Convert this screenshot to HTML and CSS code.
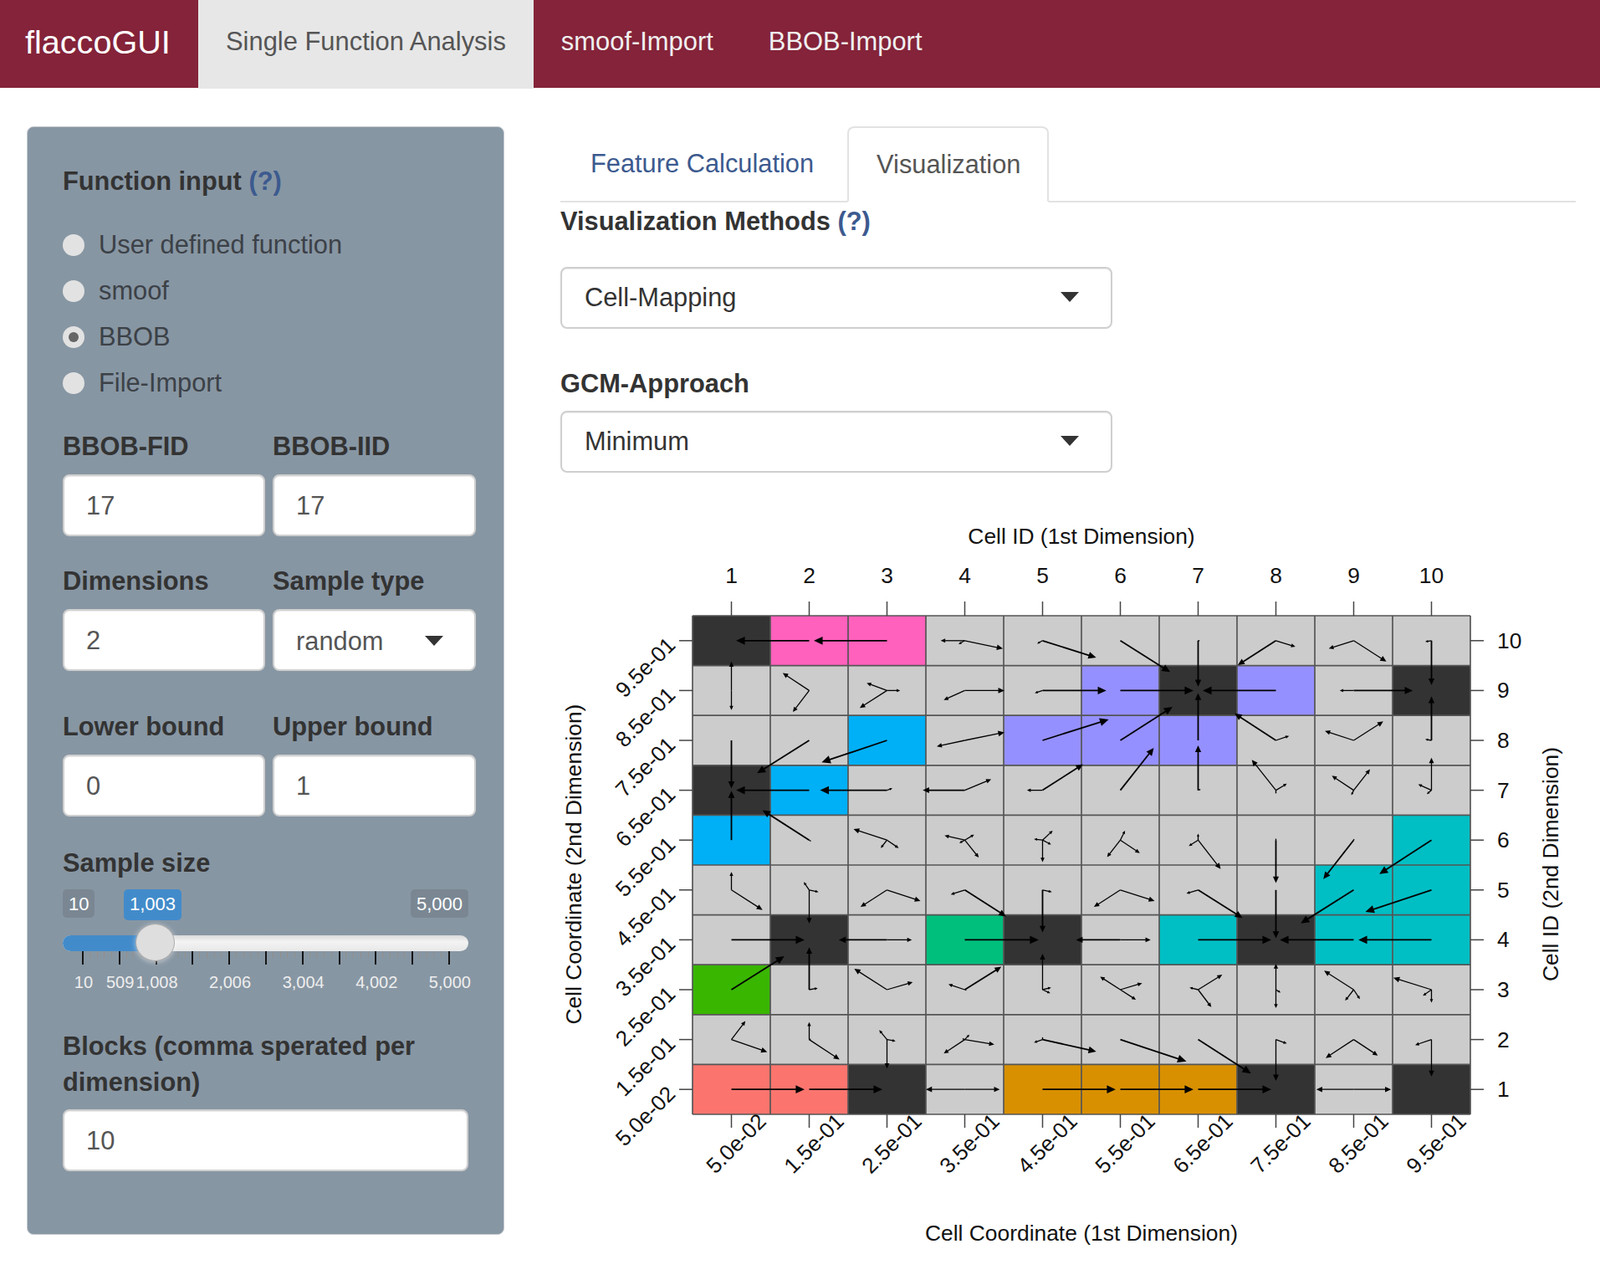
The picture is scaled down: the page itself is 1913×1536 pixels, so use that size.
FILE: index.html
```html
<!DOCTYPE html>
<html lang="en">
<head>
    <meta charset="UTF-8">
    <title>flaccoGUI</title>
    <link rel="stylesheet" href="styles.css">
</head>
<body>

<nav class="topbar">
    <a class="brand">flaccoGUI</a>
    <a class="topbar-item active">Single Function Analysis</a>
    <a class="topbar-item">smoof-Import</a>
    <a class="topbar-item">BBOB-Import</a>
</nav>

<div class="page">
    <aside class="sidebar">
        <div class="label first-label">Function input <span class="help">(?)</span></div>
        <div class="radios">
            <div class="radio"><span class="dot"></span>User defined function</div>
            <div class="radio"><span class="dot"></span>smoof</div>
            <div class="radio"><span class="dot checked"></span>BBOB</div>
            <div class="radio"><span class="dot"></span>File-Import</div>
        </div>

        <div class="two-cols">
            <div>
                <div class="label">BBOB-FID</div>
                <input class="field" type="text" value="17">
            </div>
            <div>
                <div class="label">BBOB-IID</div>
                <input class="field" type="text" value="17">
            </div>
        </div>

        <div class="two-cols">
            <div>
                <div class="label">Dimensions</div>
                <input class="field" type="text" value="2">
            </div>
            <div>
                <div class="label">Sample type</div>
                <div class="field select side-select">random<span class="caret"></span></div>
            </div>
        </div>

        <div class="two-cols bounds">
            <div>
                <div class="label">Lower bound</div>
                <input class="field" type="text" value="0">
            </div>
            <div>
                <div class="label">Upper bound</div>
                <input class="field" type="text" value="1">
            </div>
        </div>

        <div class="label sample-label">Sample size</div>
        <div class="slider">
            <div class="slider-ends">
                <span class="badge">10</span>
                <span class="badge">5,000</span>
            </div>
            <span class="badge current">1,003</span>
            <div class="slider-bar"><div class="slider-fill"></div></div>
            <span class="slider-handle"></span>
            <div class="slider-ticks"></div>
            <div class="slider-labels">
                <span>10</span><span>509</span><span>1,008</span><span></span><span>2,006</span><span></span><span>3,004</span><span></span><span>4,002</span><span></span><span>5,000</span>
            </div>
        </div>

        <div class="label blocks-label">Blocks (comma sperated per dimension)</div>
        <input class="field" type="text" value="10">
    </aside>

    <main class="content">
        <div class="tabs">
            <a class="tab">Feature Calculation</a>
            <a class="tab active">Visualization</a>
        </div>

        <div class="label methods-label">Visualization Methods <span class="help">(?)</span></div>
        <div class="field select wide-select methods"><span class="select-text">Cell-Mapping</span><span class="caret"></span></div>

        <div class="label gcm-label">GCM-Approach</div>
        <div class="field select wide-select"><span class="select-text">Minimum</span><span class="caret"></span></div>

        <svg id="plot" class="plot" viewBox="670 610 1230 900" width="1230" height="900"></svg>
    </main>
</div>

<script src="plot.js"></script>
</body>
</html>
```
FILE: styles.css
```css
body {
    margin: 0;
    font-family: "Liberation Sans", Arial, sans-serif;
    font-size: 30.8px;
    line-height: 43px;
    color: #333;
    background: white;
}

.topbar {
    display: flex;
    height: 105px;
    background-color: #842339;
    color: #f0f0f0;
}

.brand {
    padding: 29px 34px 0 30px;
    width: 173px;
    font-size: 39.6px;
    color: white;
}

.topbar-item {
    padding: 28px 33px 0;
    font-size: 30.9px;
}

.topbar-item.active {
    height: 78px;
    background-color: #e7e7e7;
    color: #555;
}

.page {
    display: flex;
    align-items: flex-start;
    padding: 46px 29px 0 32px;
}

.sidebar {
    box-sizing: border-box;
    width: 571px;
    height: 1325px;
    margin-right: 67px;
    padding: 43px 42px 0;
    flex-shrink: 0;
    background-color: #8796a3;
    border: 1px solid #c4c9ce;
    border-radius: 8px;
}

.label {
    font-weight: bold;
}

.help {
    color: #3c5a8f;
}

.first-label {
    margin-bottom: 33px;
}

.radios {
    margin-bottom: 33px;
}

.radio {
    display: flex;
    align-items: center;
    margin-bottom: 12px;
    color: #3c4147;
}

.radio:last-child {
    margin-bottom: 0;
}

.dot {
    position: relative;
    box-sizing: border-box;
    width: 26px;
    height: 26px;
    margin-right: 17px;
    background: #e2e2e2;
    border-radius: 50%;
}

.dot.checked::after {
    content: "";
    position: absolute;
    top: 7px;
    left: 7px;
    width: 12px;
    height: 12px;
    background: #666;
    border-radius: 50%;
}

.two-cols {
    display: grid;
    grid-template-columns: 242px 243px;
    gap: 9px;
    margin-bottom: 32px;
}

.two-cols .label {
    margin-bottom: 12px;
}

.two-cols + .bounds {
    margin-top: 45px;
    margin-bottom: 34px;
}

.field {
    box-sizing: border-box;
    display: block;
    width: 100%;
    height: 74px;
    padding: 2px 26px 0;
    background: white;
    border: 2px solid #cfcfcf;
    border-radius: 8px;
    box-shadow: inset 0 1px 1px rgba(0, 0, 0, 0.08);
    font-family: inherit;
    font-size: 30.8px;
    color: #555;
}

.select {
    display: flex;
    align-items: center;
    justify-content: space-between;
    color: #333;
}

.side-select {
    color: #555;
    padding-right: 37px;
}

.wide-select {
    width: 660px;
    padding: 0 38px 0 27px;
}

.select-text {
    padding-bottom: 1px;
}

.caret {
    width: 0;
    height: 0;
    border-left: 11px solid transparent;
    border-right: 11px solid transparent;
    border-top: 12px solid #333;
}

.wide-select .caret {
    margin-bottom: 3px;
}

.slider {
    position: relative;
    height: 176px;
}

.slider-ends {
    display: flex;
    justify-content: space-between;
    padding-top: 10px;
    height: 34px;
}

.badge {
    padding: 0 7px;
    height: 34px;
    background: #7a8793;
    border-radius: 5px;
    font-size: 22px;
    line-height: 35px;
    color: white;
}

.badge.current {
    position: absolute;
    top: 10px;
    left: 73px;
    height: 37px;
    background: #428bca;
}

.slider-bar {
    margin-top: 21px;
    height: 19px;
    background: linear-gradient(#dadada, #f3f3f3 40%, #e8e8e8);
    border-radius: 10px;
    overflow: hidden;
}

.slider-fill {
    width: 100px;
    height: 100%;
    background: #428bca;
}

.slider-handle {
    position: absolute;
    top: 51px;
    left: 87px;
    box-sizing: border-box;
    width: 47px;
    height: 45px;
    background: #dedede;
    border: 1px solid #aaa;
    border-radius: 50%;
    box-shadow: 0 1px 6px rgba(255, 255, 255, 0.5);
}

.slider-ticks {
    height: 16px;
    margin-left: 23px;
    width: 440px;
    background:
        repeating-linear-gradient(90deg, #151515 0 2px, transparent 2px 43.8px),
        repeating-linear-gradient(90deg, rgba(150, 140, 130, 0.7) 0 1px, transparent 1px 8.76px) 0 0 / 100% 8px no-repeat;
}

.slider-labels {
    display: grid;
    grid-template-columns: repeat(11, 43.8px);
    margin: 9px 0 0 3px;
    font-size: 20px;
    line-height: 24px;
    color: #eee;
}

.slider-labels span {
    justify-self: center;
    white-space: nowrap;
}

.blocks-label {
    margin-bottom: 11px;
}

.content {
    flex: 0 0 1214px;
    min-width: 0;
}

.tabs {
    display: flex;
    height: 89px;
    gap: 4px;
    border-bottom: 2px solid #e2e2e2;
}

.tab {
    box-sizing: border-box;
    height: 91px;
    padding: 23px 36px 0;
    color: #3c5a8f;
}

.tab.active {
    padding-left: 33px;
    padding-right: 32px;
    padding-top: 22px;
    background: white;
    border: 2px solid #e2e2e2;
    border-bottom-color: white;
    border-radius: 8px 8px 0 0;
    color: #555;
}

.methods-label {
    margin-top: 1px;
}

.methods {
    margin-top: 33px;
}

.gcm-label {
    margin-top: 44px;
    margin-bottom: 11px;
}

.plot {
    display: block;
    margin-top: 45px;
    overflow: visible;
}

.plot text {
    font-family: "Liberation Sans", Arial, sans-serif;
    font-size: 26.4px;
    fill: #111;
}

.plot .tick-label {
    font-size: 26px;
}

.grid-line {
    stroke: #555;
    stroke-width: 1.7;
}

.tick {
    stroke: #444;
    stroke-width: 1.5;
}

.flow {
    stroke: #000;
    fill: none;
}

.flow-head {
    fill: #000;
}
```
FILE: plot.js
```js
// cell mapping plot, everything is given in page pixels
const svg = document.getElementById("plot");
const NS = "http://www.w3.org/2000/svg";

const LEFT = 828, TOP = 736, CELL_W = 93, CELL_H = 59.6;

const colors = {
    ".": "#cccccc", d: "#333333", p: "#ff61bc", v: "#9590ff", b: "#00b0f6",
    t: "#00bfc4", g: "#00bf7d", l: "#39b600", s: "#fb756e", o: "#d89000"
};

// rows from the top (cell id 10) to the bottom (cell id 1)
const cellColors = [
    "dpp.......",
    ".....vdv.d",
    "..b.vvv...",
    "db........",
    "b........t",
    "........tt",
    ".d.gd.tdtt",
    "l.........",
    "..........",
    "ssd.oood.d"
];

// arrows of each cell: [dx, dy] in cell units, from the cell centre
const arrows = [
    [[], [[-.94,0]], [[-.94,0]], [[-.31,0],[.49,.16],[-.08,.07]], [[-.07,.06],[.69,.34]],
     [[.64,.63]], [[0,.92],[.04,0]], [[-.49,.49],[.25,.12]], [[-.32,.16],[.42,.42]], [[0,.89],[-.08,.02]]],
    [[[0,-.58],[0,.39]], [[-.34,-.35],[-.21,.43]], [[-.26,-.15],[-.35,.35],[.17,0]], [[-.27,.19],[.51,0]], [[-.1,.05],[.82,0]],
     [[.94,0]], [], [[-.94,0]], [[.76,0],[-.18,0]], []],
    [[[0,.96]], [[-.67,.66]], [[-.84,.44]], [[.51,-.16],[-.36,.12]], [[.85,-.42]],
     [[.67,-.67]], [[0,-.95]], [[-.53,-.54],[.17,-.09]], [[-.37,-.19],[.38,-.38]], [[0,-.88],[-.08,-.02]]],
    [[], [[-.94,0]], [[-.86,0],[.07,-.04]], [[-.54,0],[.34,-.22]], [[-.2,0],[.52,-.52]],
     [[.43,-.85]], [[0,-.9],[.05,-.03]], [[-.31,-.61],[.14,-.13],[0,.1]], [[-.28,-.29],[.21,-.42],[-.03,.1]], [[0,-.65],[-.17,-.12],[-.06,.08]]],
    [[[0,-.99]], [[-.6,-.6],[.04,.04]], [[-.43,-.22],[.15,.16],[-.08,.16]], [[-.26,-.09],[.12,-.11],[.18,.35],[-.07,.06]], [[.13,-.19],[.11,.09],[-.11,-.02],[0,.44]],
     [[.06,-.19],[.25,.26],[-.17,.34]], [[0,-.13],[-.12,.12],[.29,.58]], [[0,.86],[0,-.06]], [[-.39,.78],[.01,-.05]], [[-.67,.68]]],
    [[[0,-.36],[.4,.4]], [[-.07,-.16],[.12,.04],[0,.67]], [[-.34,.34],[.43,.22]], [[-.18,.09],[.53,.53]], [[.12,.04],[0,.85]],
     [[-.34,.34],[.44,.22]], [[-.15,.07],[.57,.56]], [[0,.97]], [[-.68,.67]], [[-.85,.44]]],
    [[[.94,0]], [], [[-.62,0],[.32,0]], [[.95,0]], [],
     [[-.57,0],[.39,0]], [[.94,0]], [], [[-.95,0]], [[-.94,0]]],
    [[[.68,-.67]], [[0,-.85],[.11,-.03]], [[-.42,-.42],[.33,-.15]], [[-.21,-.11],[.47,-.46],[.04,.02]], [[0,-.72],[.11,-.04],[.1,.07]],
     [[-.26,-.26],[.28,-.13],[.2,.2]], [[-.11,-.04],[.31,-.3],[.17,.35]], [[0,-.52],[0,.37],[.06,.06]], [[-.38,-.38],[-.11,.22],[.08,.19]], [[-.49,-.24],[0,.26],[-.11,.12]]],
    [[[.18,-.37],[.46,.25]], [[0,-.35],[.39,.4],[.04,-.02]], [[-.1,-.19],[.11,.03],[0,.58],[.01,-.04]], [[-.27,.28],[.38,.1],[.06,-.1],[-.05,-.03]], [[-.11,.06],[0,-.08],[.69,.24]],
     [[.85,.44]], [[.68,.68]], [[.14,.08],[0,.83]], [[-.36,.37],[.31,.32]], [[-.21,.11],[0,.74]]],
    [[[.94,0]], [[.94,0]], [], [[-.5,0],[.45,0]], [[.94,0]],
     [[.94,0]], [[.94,0]], [], [[-.48,0],[.48,0]], []]
];

const xTicks = ["5.0e-02", "1.5e-01", "2.5e-01", "3.5e-01", "4.5e-01", "5.5e-01", "6.5e-01", "7.5e-01", "8.5e-01", "9.5e-01"];

function add(name, attrs, text) {
    const el = document.createElementNS(NS, name);
    for (const key in attrs) el.setAttribute(key, attrs[key]);
    if (text) el.textContent = text;
    svg.appendChild(el);
    return el;
}

function line(x1, y1, x2, y2, cls, extra) {
    return add("line", Object.assign({ x1, y1, x2, y2, class: cls }, extra));
}

function drawArrow(x, y, dx, dy) {
    const len = Math.hypot(dx, dy);
    const headLen = Math.min(10.5, 2.6 + len * 0.1);
    const half = headLen * 0.46;
    const ux = dx / len, uy = dy / len;
    const tipX = x + dx, tipY = y + dy;
    const baseX = tipX - ux * headLen, baseY = tipY - uy * headLen;
    line(x, y, baseX + ux, baseY + uy, "flow", { "stroke-width": len > 50 ? 1.8 : 1.3 });
    if (len < 6) return;
    const pts = [
        [tipX, tipY],
        [baseX - uy * half, baseY + ux * half],
        [baseX + uy * half, baseY - ux * half]
    ];
    add("polygon", { points: pts.map(p => p.join(",")).join(" "), class: "flow-head" });
}

// cells
cellColors.forEach((row, r) => {
    [...row].forEach((c, i) => {
        add("rect", { x: LEFT + i * CELL_W, y: TOP + r * CELL_H, width: CELL_W, height: CELL_H, fill: colors[c] });
    });
});

// grid
for (let i = 0; i <= 10; i++) {
    const x = LEFT + i * CELL_W, y = TOP + i * CELL_H;
    line(x, TOP, x, TOP + 10 * CELL_H, "grid-line");
    line(LEFT, y, LEFT + 10 * CELL_W, y, "grid-line");
}

// flow arrows
arrows.forEach((row, r) => {
    row.forEach((cell, i) => {
        const cx = LEFT + (i + 0.5) * CELL_W, cy = TOP + (r + 0.5) * CELL_H;
        cell.forEach(a => drawArrow(cx, cy, a[0] * CELL_W, a[1] * CELL_H));
    });
});

// axes
const bottom = TOP + 10 * CELL_H, right = LEFT + 10 * CELL_W;
for (let i = 0; i < 10; i++) {
    const x = LEFT + (i + 0.5) * CELL_W;
    const y = TOP + (i + 0.5) * CELL_H;
    line(x, TOP - 17, x, TOP, "tick");
    line(x, bottom, x, bottom + 16, "tick");
    line(LEFT - 16, y, LEFT, y, "tick");
    line(right, y, right + 16, y, "tick");

    add("text", { x, y: 697, "text-anchor": "middle" }, String(i + 1));
    add("text", { x: x + 43, y: 1342, "text-anchor": "end", class: "tick-label", transform: `rotate(-45 ${x + 43} 1342)` }, xTicks[i]);

    const yLabelY = y + 7;
    add("text", { x: 809, y: yLabelY, "text-anchor": "end", class: "tick-label", transform: `rotate(-45 809 ${yLabelY})` }, xTicks[9 - i]);
    add("text", { x: 1790, y: y + 9 }, String(10 - i));
}

add("text", { x: 1293, y: 650, "text-anchor": "middle" }, "Cell ID (1st Dimension)");
add("text", { x: 1293, y: 1483, "text-anchor": "middle" }, "Cell Coordinate (1st Dimension)");
add("text", { x: 695, y: 1033, "text-anchor": "middle", transform: "rotate(-90 695 1033)" }, "Cell Coordinate (2nd Dimension)");
add("text", { x: 1863, y: 1033, "text-anchor": "middle", transform: "rotate(-90 1863 1033)" }, "Cell ID (2nd Dimension)");
```
